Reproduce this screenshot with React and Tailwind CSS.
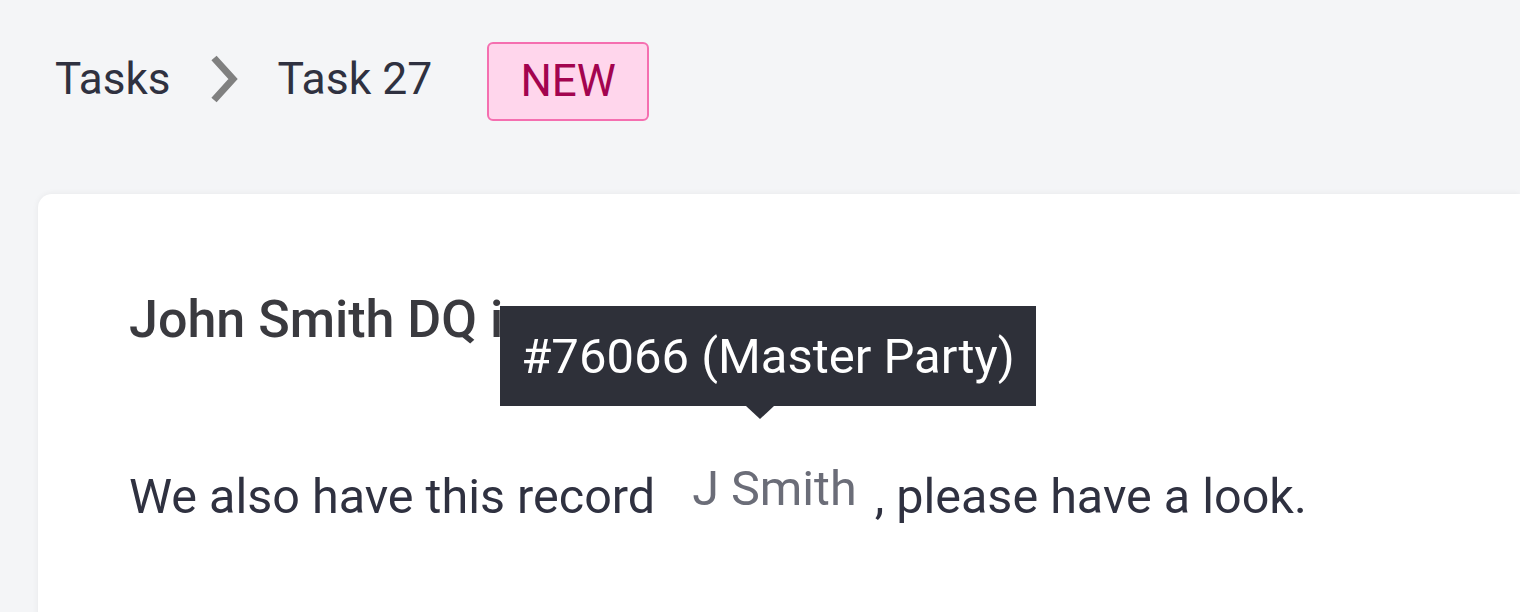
export default function App() {
  return (
    <div className="w-[1520px] h-[612px] overflow-hidden bg-[#f4f5f7] font-['Roboto',sans-serif]">
      <div className="flex items-center h-[160px] pl-[55px] pb-[2px]">
        <span className="text-[44px] leading-none text-[#2f3140]">Tasks</span>
        <svg className="ml-[38px] mr-[35px]" width="34" height="50" viewBox="0 0 34 50">
          <path d="M6 4 L25 25 L6 46" fill="none" stroke="#808080" strokeWidth="7" />
        </svg>
        <span className="text-[44.5px] leading-none text-[#2f3140]">Task 27</span>
        <span className="ml-[55px] mt-[4px] h-[79px] px-[31px] flex items-center rounded-[6px] border-2 border-[#f56fb0] bg-[#ffd6ec] text-[44px] leading-none text-[#a3044f]">NEW</span>
      </div>
      <div className="ml-[38px] mt-[34px] h-[500px] rounded-tl-[14px] bg-white shadow-[0_0_6px_rgba(0,0,0,0.06)] pl-[91px] pt-[100px]">
        <h1 className="text-[52px] font-medium leading-none text-[#3a3a3f]">John Smith DQ issue</h1>
        <p className="mt-[127px] text-[48.5px] leading-none text-[#2f3140]">
          We also have this record{" "}
          <span className="relative inline-block ml-[25px] mr-[18px] text-[#6b6d78] -translate-y-[8px]">
            J Smith
            <span className="absolute left-[-192px] bottom-[calc(100%+59px)] whitespace-nowrap bg-[#2e3039] text-white text-[49px] leading-none px-[21px] py-[25.5px]">
              #76066 (Master Party)
              <span className="absolute left-[246px] top-full w-0 h-0 border-x-[14px] border-x-transparent border-t-[13px] border-t-[#2e3039]"></span>
            </span>
          </span>
          , please have a look.
        </p>
      </div>
    </div>
  );
}
